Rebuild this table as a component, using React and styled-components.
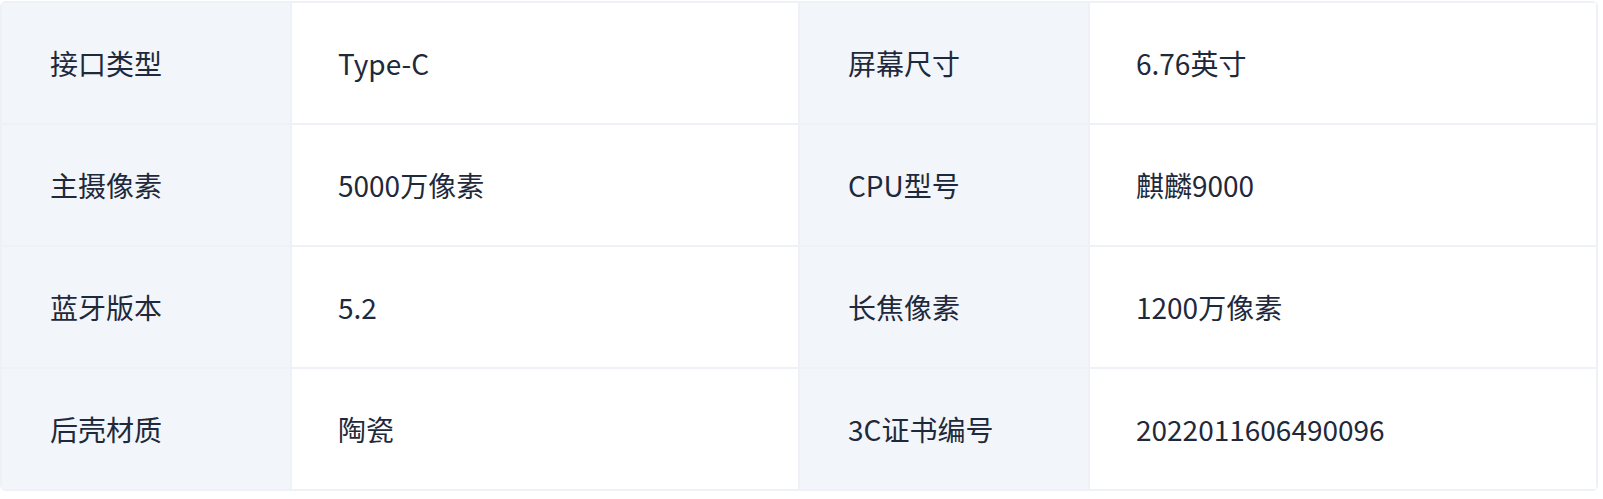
import React from 'react';
import styled, { createGlobalStyle } from 'styled-components';

const GlobalStyle = createGlobalStyle`
    body {
        margin: 0;
        background: #ffffff;
        font-family: "Noto Sans CJK SC", "Noto Sans", sans-serif;
    }
`;

const SpecGrid = styled.div`
    display: grid;
    grid-template-columns: 288px 1fr 288px 1fr;
    gap: 2px;
    padding: 2px;
    margin-top: 1px;
    width: 1598px;
    box-sizing: border-box;
    background: #eef2f6;
    border-radius: 6px;
    overflow: hidden;
`;

const Cell = styled.div`
    display: flex;
    align-items: center;
    height: 120px;
    padding-left: ${props => props.label ? '48px' : '46px'};
    background: ${props => props.label ? '#f2f5f9' : '#ffffff'};
    color: #1e293b;
    font-size: 28px;
    line-height: 1;
`;

const specs = [
    ['接口类型', 'Type-C', '屏幕尺寸', '6.76英寸'],
    ['主摄像素', '5000万像素', 'CPU型号', '麒麟9000'],
    ['蓝牙版本', '5.2', '长焦像素', '1200万像素'],
    ['后壳材质', '陶瓷', '3C证书编号', '2022011606490096'],
];

const App = () => {
    return (
        <>
            <GlobalStyle />
            <SpecGrid>
                {specs.map((row, i) => row.map((text, j) => (
                    <Cell key={`${i}-${j}`} label={j % 2 === 0}>{text}</Cell>
                )))}
            </SpecGrid>
        </>
    );
};

export default App;
